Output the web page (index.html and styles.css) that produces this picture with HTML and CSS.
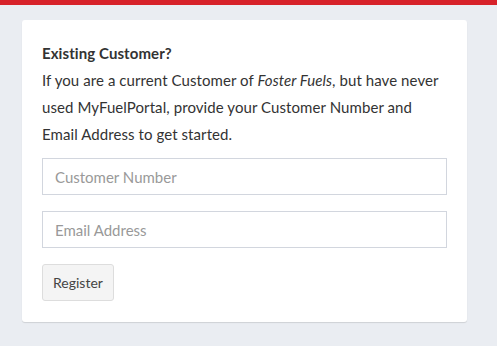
FILE: index.html
```html
<!doctype html>
<html>
	<head>
		<meta charset='utf-8'>
		<title>MyFuelPortal - register</title>
		<link rel="stylesheet" href="styles.css">
	</head>
	<body>
		<div class='topbar'></div>
		<main class='page'>
			<section class='card'>
				<form class='register'>
					<h4 class='title'>Existing Customer?</h4>
					<p class='intro'>
						If you are a current Customer of <em>Foster Fuels</em>, but have never
						used MyFuelPortal, provide your Customer Number and
						Email Address to get started.
					</p>
					<input class='field' placeholder='Customer Number' autocomplete='off'>
					<input class='field' type='email' placeholder='Email Address' autocomplete='off'>
					<button class='btn'>Register</button>
				</form>
			</section>
		</main>
	</body>
</html>
```

FILE: styles.css
```css
html {
	min-height: 100%;
	background: #eaedf2;
}

body {
	margin: 0;
	font-family: "Source Sans Pro", "Lato", sans-serif;
	font-size: 15px;
	letter-spacing: 0.08px;
	color: #333;
}

.topbar {
	height: 5px;
	background: #d7222a;
}

.page {
	padding: 15px 30px 24px 22px;
}

.card {
	background: #fff;
	border-radius: 3px;
	box-shadow: 0 1px 1px rgba(0, 0, 0, 0.12);
	padding: 20px 20px 21px 20px;
}

.register {
	display: flex;
	flex-direction: column;
	align-items: flex-start;
	gap: 16px;
}

.title {
	margin: 0 0 -16px 0;
	font-size: 15px;
	font-weight: bold;
	line-height: 27px;
}

.intro {
	margin: 0 0 -6px 0;
	line-height: 27px;
}

.field {
	width: 100%;
	box-sizing: border-box;
	height: 37px;
	padding: 6px 12px;
	border: 1px solid #d2d6de;
	border-radius: 0;
	font: inherit;
	color: #555;
	outline: none;
}

.field::placeholder {
	color: #999;
}

.btn {
	height: 37px;
	padding: 0 10px;
	background: #f4f4f4;
	border: 1px solid #ddd;
	border-radius: 3px;
	font-family: inherit;
	font-size: 14px;
	color: #444;
}
```
